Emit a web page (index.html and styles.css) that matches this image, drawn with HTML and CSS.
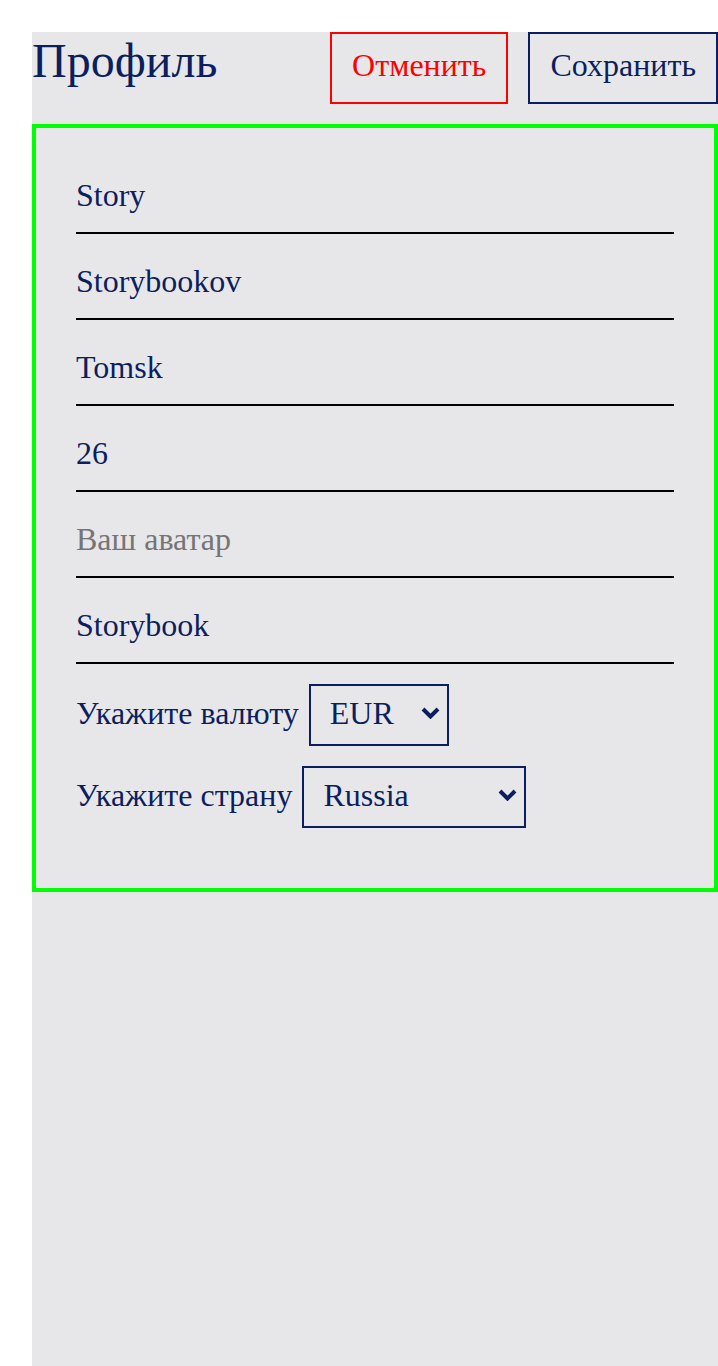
FILE: index.html
```html
<!DOCTYPE html>
<html lang="ru">
<head>
<meta charset="utf-8">
<title>Профиль</title>
<link rel="stylesheet" href="styles.css">
</head>
<body>
<div class="page">
  <header class="header">
    <h1 class="title">Профиль</h1>
    <div class="actions">
      <button class="btn btn-cancel" type="button">Отменить</button>
      <button class="btn btn-save" type="button">Сохранить</button>
    </div>
  </header>
  <form class="card">
    <input class="field" type="text" value="Story">
    <input class="field" type="text" value="Storybookov">
    <input class="field" type="text" value="Tomsk">
    <input class="field" type="text" value="26">
    <input class="field" type="text" placeholder="Ваш аватар">
    <input class="field" type="text" value="Storybook">
    <label class="select-row">
      <span class="select-label">Укажите валюту</span>
      <span class="select-wrap select-currency">
        <select class="select">
          <option>EUR</option>
          <option>USD</option>
          <option>RUB</option>
        </select>
        <svg class="chevron" width="19" height="12" viewBox="0 0 19 12"><polyline points="2,2 9.5,9.5 17,2" fill="none" stroke="currentColor" stroke-width="4"/></svg>
      </span>
    </label>
    <label class="select-row">
      <span class="select-label">Укажите страну</span>
      <span class="select-wrap select-country">
        <select class="select">
          <option>Russia</option>
          <option>Belarus</option>
          <option>Kazakhstan</option>
        </select>
        <svg class="chevron" width="19" height="12" viewBox="0 0 19 12"><polyline points="2,2 9.5,9.5 17,2" fill="none" stroke="currentColor" stroke-width="4"/></svg>
      </span>
    </label>
  </form>
</div>
</body>
</html>
```

FILE: styles.css
```css
html, body {
  margin: 0;
  padding: 0;
  background: #ffffff;
}

body {
  font-family: "Liberation Serif", "Times New Roman", serif;
  color: #0b1f60;
}

.page {
  margin: 32px 0 0 32px;
  min-height: 1334px;
  background: #e7e7ea;
}

.header {
  display: flex;
  justify-content: space-between;
  align-items: flex-start;
  height: 72px;
}

.title {
  margin: 1px 0 0 0;
  font-size: 48px;
  font-weight: normal;
  color: #0b1f60;
}

.actions {
  display: flex;
  gap: 20px;
}

.btn {
  box-sizing: border-box;
  height: 72px;
  padding: 0 20px 5px;
  background: transparent;
  font-family: "Liberation Serif", "Times New Roman", serif;
  font-size: 32px;
  border: 2px solid;
  cursor: pointer;
}

.btn-cancel {
  color: #ff0000;
  border-color: #ff0000;
}

.btn-save {
  color: #0b1f60;
  border-color: #0b1f60;
}

.card {
  margin: 20px 0 0 0;
  border: 4px solid #00ff00;
  padding: 20px 40px 60px;
  display: flex;
  flex-direction: column;
}

.field {
  box-sizing: border-box;
  display: block;
  width: 100%;
  height: 86px;
  padding: 27px 0 17px;
  margin: 0;
  border: none;
  border-bottom: 2px solid #000000;
  background: transparent;
  font-family: "Liberation Serif", "Times New Roman", serif;
  font-size: 32px;
  color: #0b1f60;
  outline: none;
}

.field::placeholder {
  color: #757575;
  opacity: 1;
}

.select-row {
  display: flex;
  align-items: baseline;
  gap: 10px;
  margin-top: 20px;
  font-size: 32px;
}

.select-wrap {
  position: relative;
  display: inline-block;
  color: #0b1f60;
}

.select-currency {
  width: 140px;
}

.select-country {
  width: 224px;
}

.select {
  box-sizing: border-box;
  display: block;
  width: 100%;
  height: 62px;
  padding: 0 40px 4px 19px;
  margin: 0;
  appearance: none;
  -webkit-appearance: none;
  background: transparent;
  border: 2px solid #0b1f60;
  border-radius: 0;
  font-family: "Liberation Serif", "Times New Roman", serif;
  font-size: 32px;
  color: #0b1f60;
  outline: none;
}

.chevron {
  position: absolute;
  right: 9px;
  top: 23px;
  pointer-events: none;
}
```
